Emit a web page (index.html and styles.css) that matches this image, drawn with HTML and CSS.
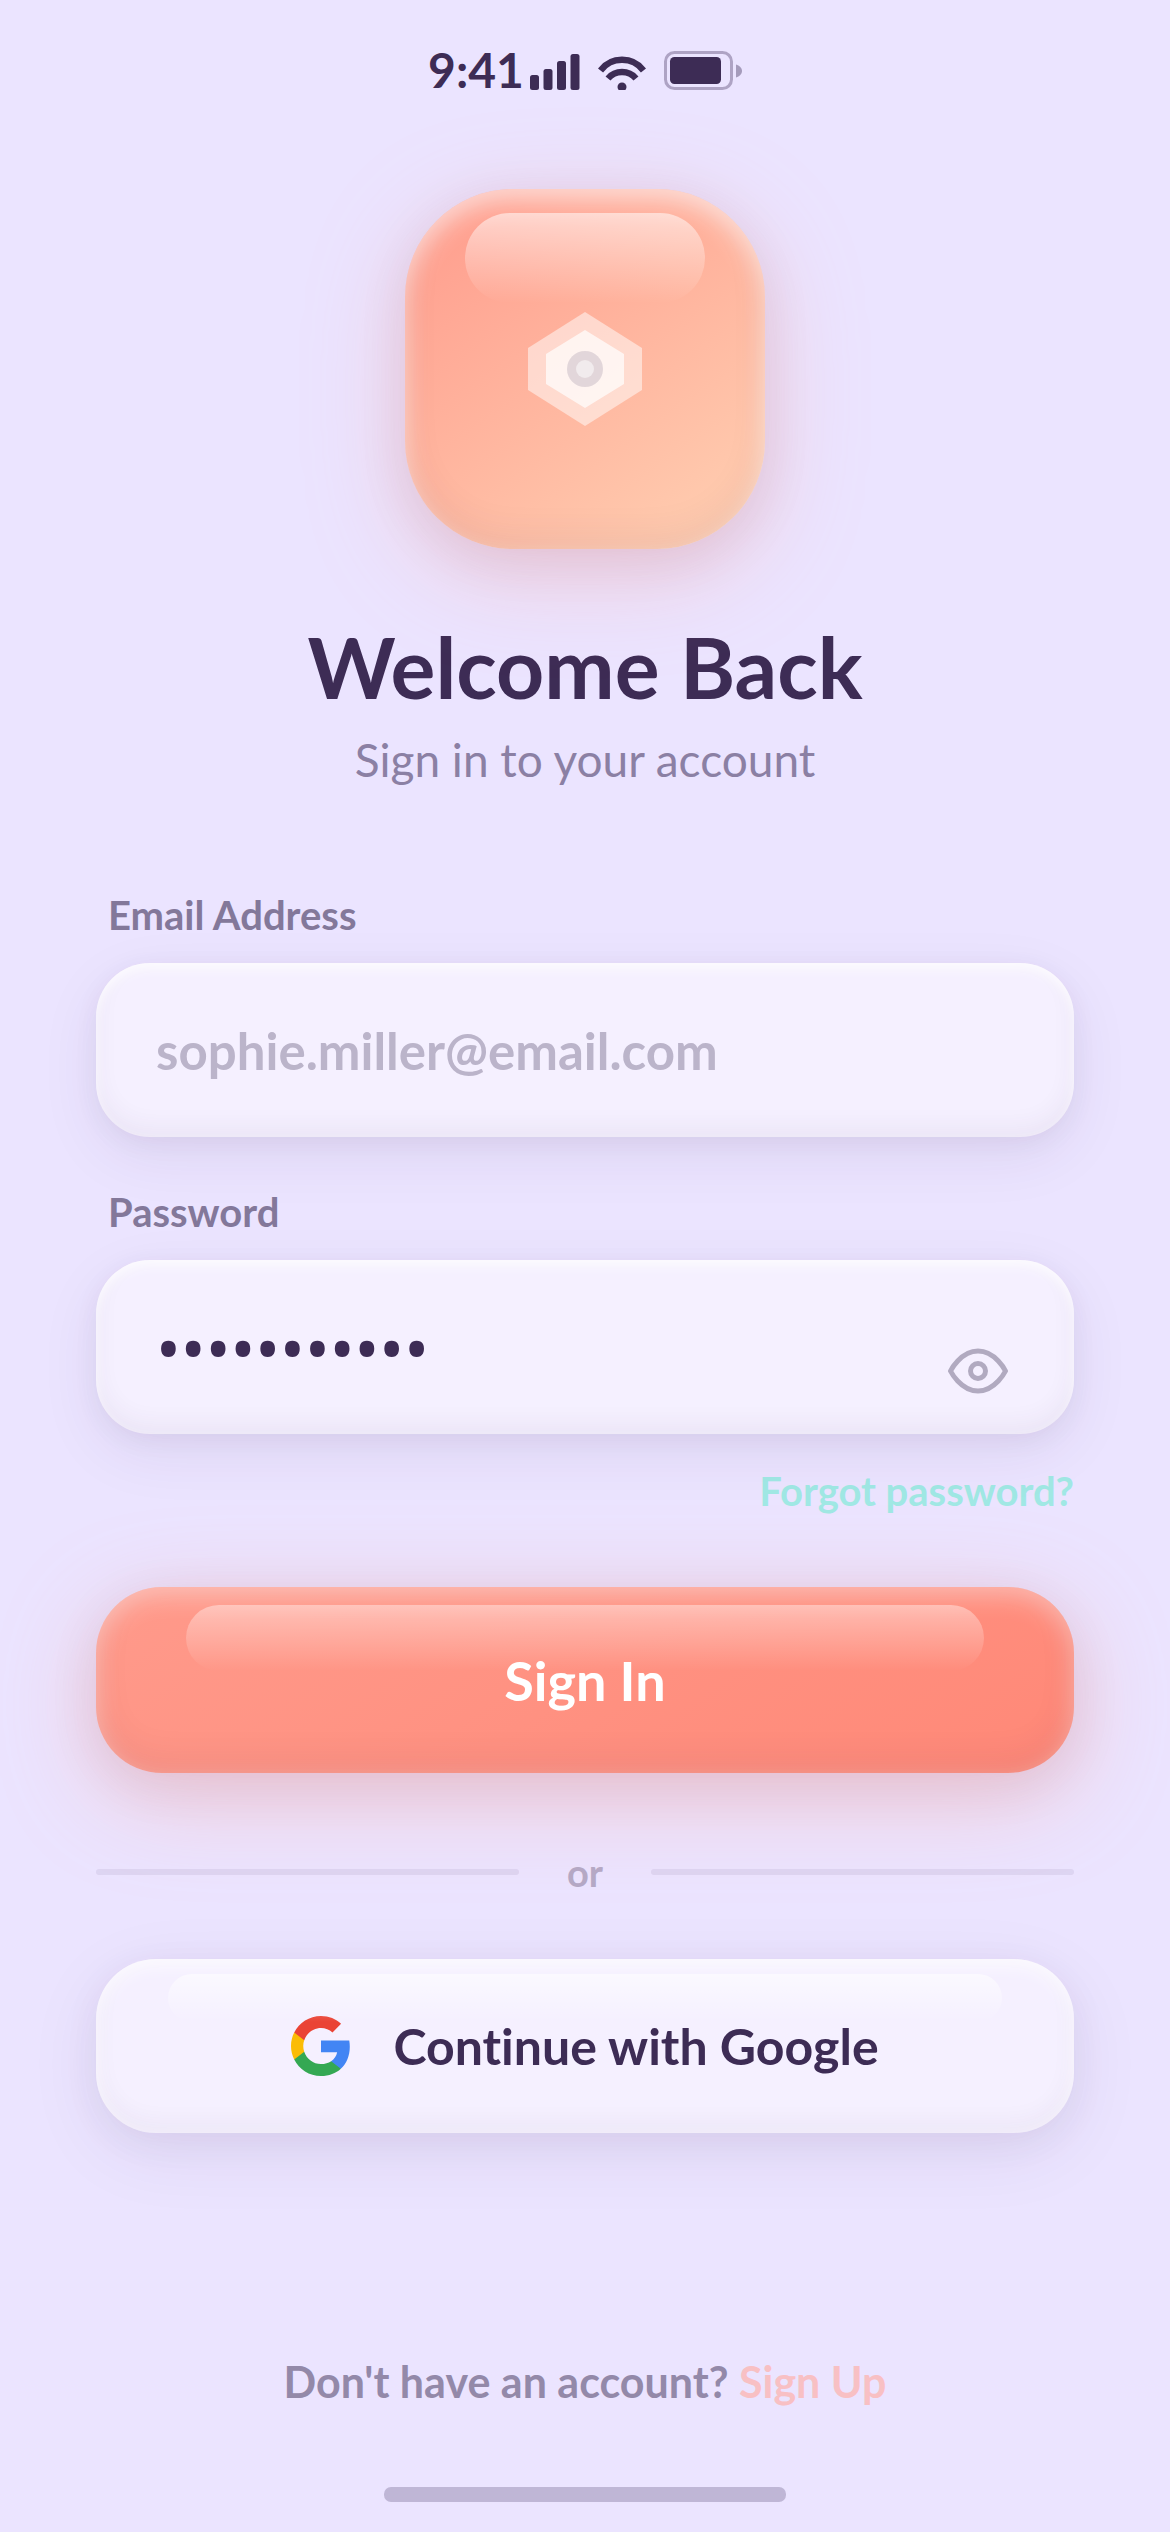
FILE: index.html
```html
<!DOCTYPE html>
<html lang="en">
<head>
  <meta charset="UTF-8">
  <meta name="viewport" content="width=device-width, initial-scale=1.0">
  <title>Sign In</title>
  <link rel="stylesheet" href="styles.css">
</head>
<body>

<div class="screen">
  <header class="status-bar">
    <span class="time">9:41</span>
    <div class="status-icons">
      <svg class="icon-signal" width="50" height="36" viewBox="0 0 50 36" fill="currentColor">
        <rect x="0" y="21" width="9" height="15" rx="2.5"/>
        <rect x="13.5" y="15" width="9" height="21" rx="2.5"/>
        <rect x="27" y="7" width="9" height="29" rx="2.5"/>
        <rect x="40.5" y="0" width="9" height="36" rx="2.5"/>
      </svg>
      <svg class="icon-wifi" width="48" height="36" viewBox="0 0 48 36" fill="none" stroke="currentColor" stroke-width="6.5">
        <path d="M2.5 16.5A27 27 0 0 1 45.5 16.5"/>
        <path d="M10 24.5A18.5 18.5 0 0 1 38 24.5"/>
        <circle cx="24" cy="33" r="4.5" fill="currentColor" stroke="none"/>
      </svg>
      <svg class="icon-battery" width="78" height="39" viewBox="0 0 78 39" fill="currentColor">
        <rect x="1.5" y="1.5" width="66" height="36" rx="9" fill="none" stroke="currentColor" stroke-width="3" opacity="0.35"/>
        <rect x="6" y="6" width="51" height="27" rx="4.5"/>
        <path d="M72 13.5c3.5 1 6 3.500 6 6.500s-2.500 5.500-6 6.500z" opacity="0.4"/>
      </svg>
    </div>
  </header>

  <main class="content">
    <div class="logo">
      <svg width="120" height="120" viewBox="0 0 120 120">
        <path d="M60 3L117 39V81L60 117L3 81V39Z" fill="#fff" opacity="0.5"/>
        <path d="M60 21L99 45V75L60 99L21 75V45Z" fill="#fff" opacity="0.7"/>
        <circle cx="60" cy="60" r="18" fill="#3d2c55" opacity="0.15"/>
        <circle cx="60" cy="60" r="9" fill="#fff" opacity="0.5"/>
      </svg>
    </div>

    <h1 class="title">Welcome Back</h1>
    <p class="subtitle">Sign in to your account</p>

    <form class="login-form" onsubmit="return false">
      <div class="field">
        <label for="email">Email Address</label>
        <input type="email" id="email" placeholder="sophie.miller@email.com">
      </div>
      <div class="field">
        <label for="password">Password</label>
        <div class="password-box">
          <input type="password" id="password" value="sophie12345">
          <button type="button" class="toggle-password" aria-label="Show password">
            <svg width="60" height="60" viewBox="0 0 24 24" fill="none" stroke="currentColor" stroke-width="2" stroke-linecap="round" stroke-linejoin="round">
              <path d="M1 12s4-8 11-8 11 8 11 8-4 8-11 8-11-8-11-8z"/>
              <circle cx="12" cy="12" r="3"/>
            </svg>
          </button>
        </div>
      </div>
      <a href="#" class="forgot">Forgot password?</a>
      <button type="submit" class="btn btn-primary">Sign In</button>
    </form>

    <div class="divider"><span>or</span></div>

    <button type="button" class="btn btn-google">
      <svg width="60" height="60" viewBox="1 1 22 22">
        <path fill="#4285f4" d="M22.560 12.250c0-.78-.07-1.530-.2-2.250H12v4.260h5.920c-.26 1.370-1.040 2.530-2.210 3.310v2.770h3.570c2.080-1.920 3.280-4.740 3.280-8.090z"/>
        <path fill="#34a853" d="M12 23c2.970 0 5.460-.98 7.280-2.660l-3.570-2.770c-.98.66-2.230 1.060-3.710 1.060-2.860 0-5.290-1.930-6.160-4.530H2.180v2.840C3.990 20.530 7.700 23 12 23z"/>
        <path fill="#fbbc05" d="M5.840 14.090c-.22-.66-.35-1.360-.35-2.090s.13-1.430.35-2.090V7.070H2.180C1.430 8.550 1 10.220 1 12s.43 3.450 1.180 4.930l2.850-2.220.81-.62z"/>
        <path fill="#ea4335" d="M12 5.380c1.620 0 3.060.56 4.210 1.640l3.150-3.150C17.450 2.090 14.970 1 12 1 7.700 1 3.990 3.470 2.180 7.070l3.660 2.840c.87-2.600 3.300-4.530 6.160-4.530z"/>
      </svg>
      Continue with Google
    </button>
  </main>

  <footer class="footer">
    <p>Don't have an account? <a href="#">Sign Up</a></p>
    <div class="home-indicator"></div>
  </footer>
</div>

</body>
</html>
```
FILE: styles.css
```css
* {
  box-sizing: border-box;
  margin: 0;
  padding: 0;
}
body {
  background-color: #ebe4ff;
  color: #3d2c55;
  font-family: "Trebuchet MS", Lato, sans-serif;
  font-weight: 700;
  font-variant-ligatures: none;
}
input, button {
  font: inherit;
  font-variant-ligatures: none;
  color: inherit;
  border: none;
}
button {
  cursor: pointer;
}
a {
  text-decoration: none;
}
svg {
  display: block;
  flex: none;
}
.screen {
  display: flex;
  flex-direction: column;
  min-height: 100vh;
  padding: 0 96px;
}

/* Status bar */
.status-bar {
  display: flex;
  justify-content: center;
  align-items: center;
  gap: 6px;
  padding-top: 40px;
}
.time {
  font-size: 48px;
  line-height: 60px;
}
.status-icons {
  display: flex;
  align-items: flex-end;
  gap: 18px;
}

/* Logo and headings */
.content {
  display: flex;
  flex-direction: column;
}
.logo {
  position: relative;
  display: flex;
  align-items: center;
  justify-content: center;
  align-self: center;
  width: 360px;
  height: 360px;
  margin-top: 89px;
  border-radius: 108px;
  background: linear-gradient(145deg, #ff9a8b 0%, #ffd1b3 100%);
  box-shadow:
    0 24px 96px rgba(255, 154, 139, 0.35),
    0 12px 48px rgba(61, 44, 85, 0.1),
    inset 0 12px 24px rgba(255, 255, 255, 0.6),
    inset 0 -12px 36px rgba(61, 44, 85, 0.08);
}
.logo::before {
  content: "";
  position: absolute;
  top: 24px;
  left: 60px;
  right: 60px;
  height: 90px;
  border-radius: 45px;
  background: linear-gradient(180deg, rgba(255, 255, 255, 0.55), rgba(255, 255, 255, 0));
}
.title {
  margin-top: 68px;
  font-size: 84px;
  line-height: 100px;
  text-align: center;
}
.subtitle {
  margin-top: 16px;
  font-size: 46px;
  font-weight: 400;
  line-height: 54px;
  text-align: center;
  color: #8b80a4;
}

/* Form */
.login-form {
  display: flex;
  flex-direction: column;
  gap: 51px;
  margin-top: 104px;
}
.field {
  display: flex;
  flex-direction: column;
  gap: 24px;
}
.field label {
  padding-left: 12px;
  font-size: 40px;
  line-height: 48px;
  color: #83789a;
}
.field input {
  width: 100%;
  height: 174px;
  padding: 0 60px;
  border-radius: 54px;
  outline: none;
  background-color: #f5f0ff;
  font-size: 51px;
  box-shadow:
    0 18px 60px rgba(61, 44, 85, 0.08),
    0 6px 24px rgba(61, 44, 85, 0.06),
    inset 0 6px 12px rgba(255, 255, 255, 0.8),
    inset 0 -9px 24px rgba(61, 44, 85, 0.06);
}
.field input::placeholder {
  color: #bbb4ca;
  opacity: 1;
}
.field input[type="password"] {
  font-family: "Noto Sans", sans-serif;
  font-size: 66px;
  font-weight: 400;
}
.password-box {
  position: relative;
}
.toggle-password {
  position: absolute;
  top: 81px;
  right: 66px;
  background: none;
  color: #b1aac0;
}
.forgot {
  align-self: flex-end;
  margin-top: -18px;
  font-size: 40px;
  line-height: 48px;
  color: #a0e8e4;
}

/* Buttons */
.btn {
  position: relative;
  display: flex;
  align-items: center;
  justify-content: center;
  width: 100%;
}
.btn::before {
  content: "";
  position: absolute;
}
.btn-primary {
  height: 186px;
  margin-top: 21px;
  border-radius: 66px;
  background: linear-gradient(145deg, #ff9a8b 0%, #ff8877 100%);
  color: #fff;
  font-size: 54px;
  box-shadow:
    0 24px 96px rgba(255, 154, 139, 0.4),
    0 12px 48px rgba(61, 44, 85, 0.1),
    inset 0 9px 24px rgba(255, 255, 255, 0.4),
    inset 0 -12px 36px rgba(61, 44, 85, 0.08);
}
.btn-primary::before {
  top: 18px;
  left: 90px;
  right: 90px;
  height: 66px;
  border-radius: 33px;
  background: linear-gradient(180deg, rgba(255, 255, 255, 0.4), rgba(255, 255, 255, 0));
}
.divider {
  display: flex;
  align-items: center;
  gap: 48px;
  margin-top: 75px;
  font-size: 38px;
  line-height: 48px;
  color: #b4a9c6;
}
.divider::before, .divider::after {
  content: "";
  flex: 1;
  height: 6px;
  border-radius: 3px;
  background-color: rgba(61, 44, 85, 0.08);
}
.btn-google {
  gap: 42px;
  height: 174px;
  margin-top: 63px;
  border-radius: 60px;
  background-color: #f5f0ff;
  font-size: 50px;
  box-shadow:
    0 18px 72px rgba(61, 44, 85, 0.08),
    0 9px 36px rgba(61, 44, 85, 0.06),
    inset 0 6px 18px rgba(255, 255, 255, 0.8),
    inset 0 -9px 24px rgba(61, 44, 85, 0.05);
}
.btn-google::before {
  top: 15px;
  left: 72px;
  right: 72px;
  height: 48px;
  border-radius: 24px;
  background: linear-gradient(180deg, rgba(255, 255, 255, 0.6), rgba(255, 255, 255, 0));
}

/* Footer */
.footer {
  display: flex;
  flex-direction: column;
  align-items: center;
  gap: 81px;
  margin-top: auto;
  padding-bottom: 30px;
  font-size: 43px;
  line-height: 48px;
  color: #9389a9;
}
.footer a {
  color: #f8c0c4;
}
.home-indicator {
  width: 402px;
  height: 15px;
  border-radius: 7px;
  background-color: #bfb6d6;
}
```
